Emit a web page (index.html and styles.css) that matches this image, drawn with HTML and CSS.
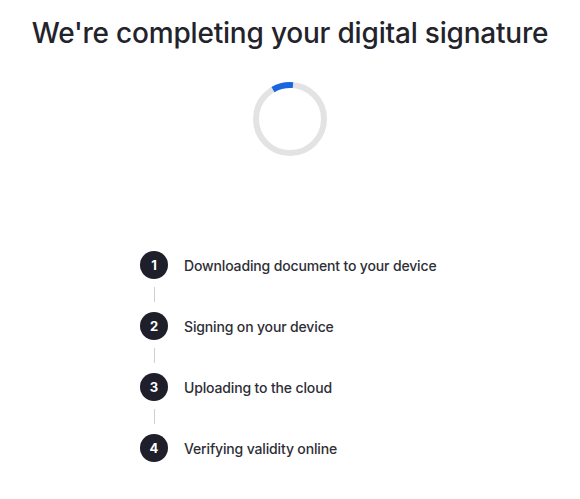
FILE: index.html
```html
<!DOCTYPE html>
<html lang="en">
<head>
	<meta charset="UTF-8">
	<meta name="viewport" content="width=device-width, initial-scale=1.0">
	<title>Signing</title>
	<link rel="stylesheet" href="styles.css">
</head>
<body>
	<div class="page">
		<h1 class="title">We're completing your digital signature</h1>
		<div class="spinner">
			<svg width="80" height="80" viewBox="0 0 80 80">
				<circle cx="40" cy="40" r="34" fill="none" stroke="#e3e3e3" stroke-width="6"/>
				<path d="M23 10.55 A34 34 0 0 1 42.97 6.13" fill="none" stroke="#1a66e0" stroke-width="6"/>
			</svg>
		</div>
		<ol class="steps">
			<li class="step"><span class="num">1</span><span class="label">Downloading document to your device</span></li>
			<li class="link"><span class="bar"></span></li>
			<li class="step"><span class="num">2</span><span class="label">Signing on your device</span></li>
			<li class="link"><span class="bar"></span></li>
			<li class="step"><span class="num">3</span><span class="label">Uploading to the cloud</span></li>
			<li class="link"><span class="bar"></span></li>
			<li class="step"><span class="num">4</span><span class="label">Verifying validity online</span></li>
		</ol>
	</div>
</body>
</html>
```
FILE: styles.css
```css
body{ margin: 0; background: #fff; font-family: Inter, "Noto Sans", sans-serif; color: #2b2b33;}
.page{ display: flex; flex-direction: column; align-items: center;}
.title{
	margin: 15px 0 0; font-size: 28px; line-height: 36px; font-weight: 500;
	color: #23232b; letter-spacing: -0.2px;
}
.spinner{ margin-top: 28px; width: 80px; height: 80px;}
.spinner svg{ display: block;}
.steps{
	list-style: none; margin: 92px 0 0; padding: 0; width: 300px;
	display: flex; flex-direction: column;
}
.step{ display: flex; align-items: center; gap: 16px; height: 28px; white-space: nowrap;}
.num{
	flex: none; width: 28px; height: 28px; border-radius: 50%; background: #1f1f2c; color: #fff;
	display: flex; align-items: center; justify-content: center;
	font-size: 13px; font-weight: 700;
}
.label{ font-size: 14px; font-weight: 500; color: #2e2e36; letter-spacing: -0.15px;}
.link{ height: 33px; padding: 8px 0 10px; box-sizing: border-box; display: flex;}
.bar{ width: 1px; margin-left: 14px; background: #cfcfcf;}
```
